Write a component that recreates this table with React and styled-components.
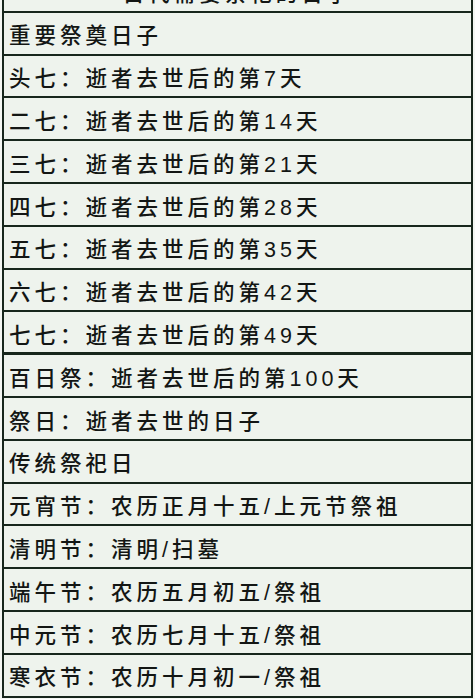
import React from "react";
import styled, { createGlobalStyle } from "styled-components";

const Global = createGlobalStyle`
  html, body {
    margin: 0;
    padding: 0;
    background: #f4f7f3;
  }
  body {
    width: 475px;
    height: 699px;
    overflow: hidden;
    font-family: "Liberation Sans", "Noto Sans CJK SC", sans-serif;
  }
`;

const Sheet = styled.div`
  margin: -30px 2px 0 2px;
  width: 471px;
  box-sizing: border-box;
  border-left: 2px solid #17261c;
  border-right: 2px solid #17261c;
  background: #eef3ed;
`;

const Row = styled.div`
  height: 42.8px;
  box-sizing: border-box;
  border-bottom: ${(p) => (p.$thick ? "3px" : "2px")} solid #17261c;
  display: flex;
  align-items: center;
  justify-content: ${(p) => (p.$center ? "center" : "flex-start")};
  padding: 8px 0 0 ${(p) => (p.$center ? "0" : "5px")};
  font-family: "Liberation Sans", "Noto Sans CJK SC", sans-serif;
  font-size: 21.5px;
  line-height: 1;
  letter-spacing: 4px;
  font-weight: 500;
  color: #131614;
  white-space: nowrap;
`;

const rows = [
  { t: "重要祭奠日子" },
  { t: "头七：逝者去世后的第7天" },
  { t: "二七：逝者去世后的第14天" },
  { t: "三七：逝者去世后的第21天" },
  { t: "四七：逝者去世后的第28天" },
  { t: "五七：逝者去世后的第35天" },
  { t: "六七：逝者去世后的第42天" },
  { t: "七七：逝者去世后的第49天", thick: true },
  { t: "百日祭：逝者去世后的第100天" },
  { t: "祭日：逝者去世的日子" },
  { t: "传统祭祀日" },
  { t: "元宵节：农历正月十五/上元节祭祖" },
  { t: "清明节：清明/扫墓" },
  { t: "端午节：农历五月初五/祭祖" },
  { t: "中元节：农历七月十五/祭祖" },
  { t: "寒衣节：农历十月初一/祭祖" },
];

export default function App() {
  return (
    <>
      <Global />
      <Sheet>
        <Row $center>古代需要祭祀的日子</Row>
        {rows.map((r, i) => (
          <Row key={i} $thick={r.thick}>
            {r.t}
          </Row>
        ))}
      </Sheet>
    </>
  );
}
